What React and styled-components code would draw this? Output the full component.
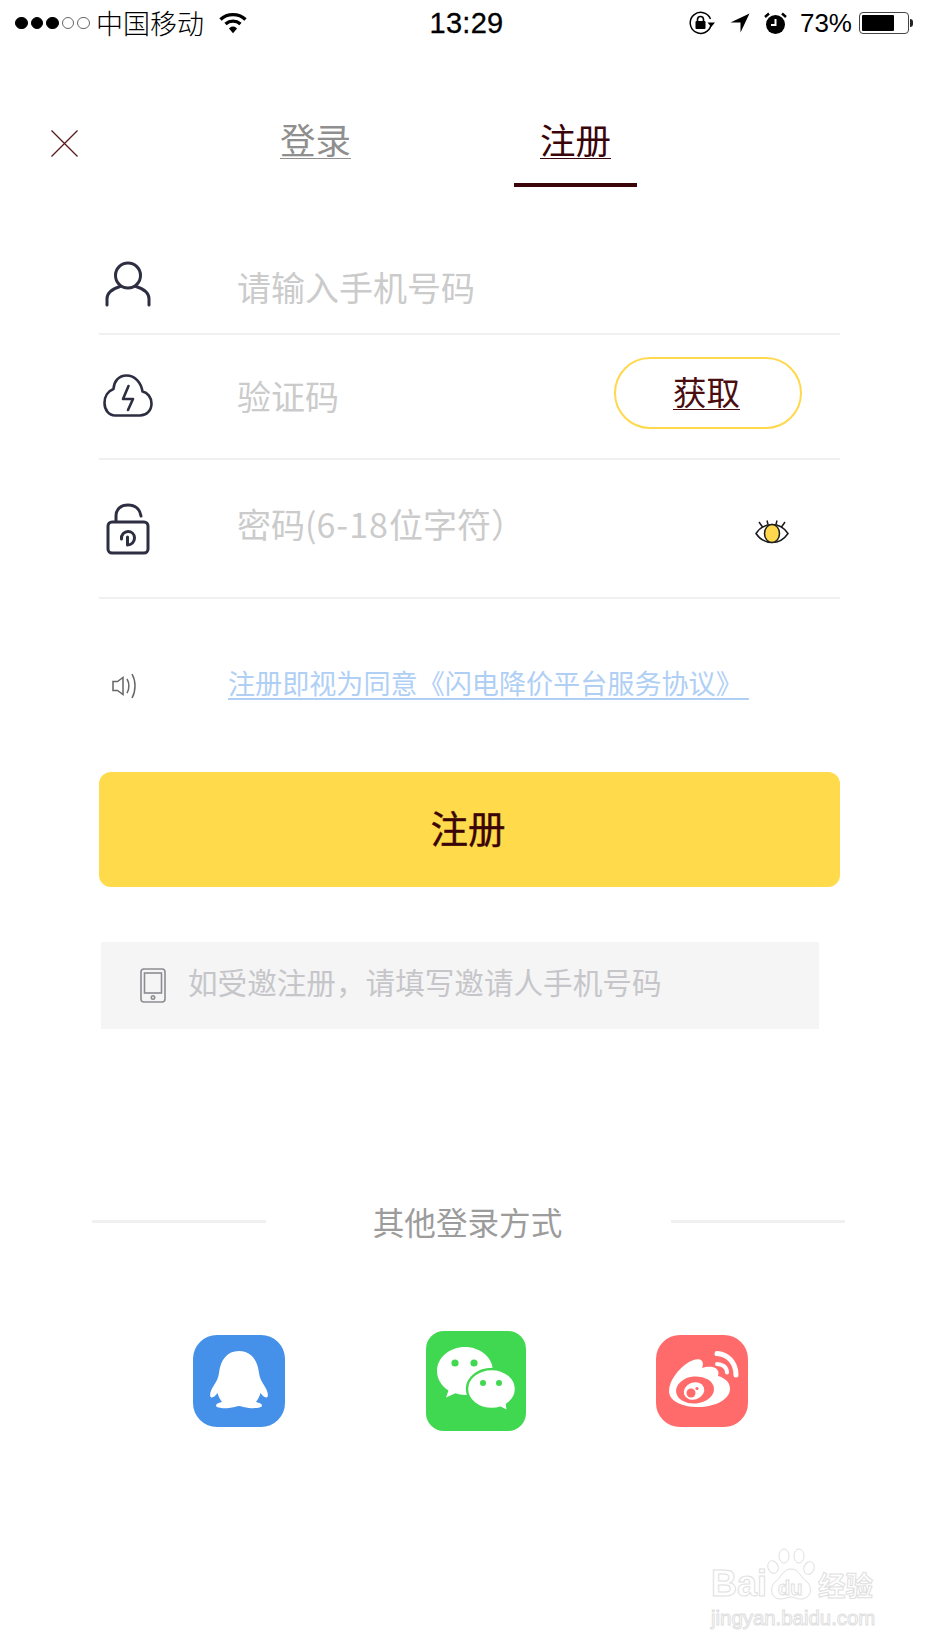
import React from "react"
import styled, { createGlobalStyle } from "styled-components"

const cjk = `"Noto Sans CJK SC", "Liberation Sans", sans-serif`
const latin = `"Liberation Sans", "Noto Sans CJK SC", sans-serif`
const ink = "#3a0508"
const iconInk = "#2e2e42"

const GlobalStyle = createGlobalStyle`
  html, body {
    margin: 0;
    padding: 0;
    background: #fff;
  }
`

const Page = styled.div`
  position: relative;
  width: 926px;
  height: 1647px;
  overflow: hidden;
  background: #fff;
  font-family: ${cjk};
`

const StatusBar = styled.div`
  display: grid;
  grid-template-columns: 1fr auto 1fr;
  align-items: center;
  height: 46px;
  padding: 0 12px 0 15px;
  color: #000;
`

const StatusLeft = styled.div`
  display: flex;
  align-items: center;
`

const Signal = styled.div`
  display: flex;
  gap: 3px;
  margin-right: 6px;
`

const Dot = styled.span`
  width: 12.6px;
  height: 12.6px;
  border-radius: 50%;
  box-sizing: border-box;
  border: 1px solid ${({ $on }) => ($on ? "#000" : "#666")};
  background: ${({ $on }) => ($on ? "#000" : "#fff")};
`

const Carrier = styled.span`
  font-size: 27px;
  font-weight: 300;
  line-height: 46px;
  margin-right: 15px;
`

const Clock = styled.div`
  font-family: ${latin};
  font-size: 29px;
  line-height: 46px;
  letter-spacing: 0.3px;
  margin-left: 4px;
  -webkit-text-stroke: 0.3px #000;
`

const StatusRight = styled.div`
  display: flex;
  align-items: center;
  justify-content: flex-end;
`

const StatusGap = styled.span`
  width: 14px;
`

const Percent = styled.span`
  font-family: ${latin};
  font-size: 26px;
  line-height: 46px;
  margin: 0 7px 0 13px;
`

const Battery = styled.div`
  position: relative;
  box-sizing: border-box;
  width: 50px;
  height: 22px;
  padding: 2px;
  margin-right: 5px;
  border: 1px solid #444;
  border-radius: 4px;
  &::after {
    content: "";
    position: absolute;
    right: -5px;
    top: 6px;
    width: 3px;
    height: 8px;
    border-radius: 0 3px 3px 0;
    background: #222;
  }
`

const BatteryFill = styled.div`
  height: 100%;
  background: #000;
  border-radius: 1px;
`

const TopNav = styled.div`
  display: flex;
  align-items: flex-start;
  padding: 70px 0 0 51px;
  height: 71px;
`

const CloseButton = styled.div`
  display: flex;
  margin: 14px 176px 0 0;
`

const Tabs = styled.div`
  display: flex;
  gap: 137px;
`

const Tab = styled.div`
  box-sizing: border-box;
  width: 123px;
  height: 71px;
  padding-top: 2px;
  text-align: center;
  font-size: 35.5px;
  font-weight: 400;
  line-height: 42px;
  color: ${({ $active }) => ($active ? ink : "#8f8f8f")};
  text-decoration: underline;
  text-decoration-thickness: 1px;
  text-decoration-skip-ink: none;
  text-underline-offset: 4px;
  border-bottom: 4px solid ${({ $active }) => ($active ? ink : "transparent")};
`

const Form = styled.div`
  margin: 56px 86px 0 99px;
`

const Field = styled.div`
  display: flex;
  align-items: center;
  height: ${({ $height }) => $height}px;
  box-sizing: border-box;
  border-bottom: 2px solid #f0f0f0;
`

const FieldIcon = styled.div`
  display: flex;
  width: 138px;
  flex: none;
  padding-left: ${({ $left }) => $left}px;
  margin-bottom: ${({ $lift }) => $lift || 0}px;
  box-sizing: border-box;
`

const Placeholder = styled.div`
  flex: 1;
  font-size: 34px;
  font-weight: 400;
  line-height: 46px;
  color: #cbcbcb;
  transform: translateY(${({ $shift }) => $shift || 0}px);
`

const Digits = styled.span`
  letter-spacing: 1px;
`

const CodeButton = styled.div`
  box-sizing: border-box;
  width: 188px;
  height: 72px;
  margin: 0 38px 8px 0;
  border: 2px solid #ffd84d;
  border-radius: 36px;
  padding-right: 3px;
  text-align: center;
  font-size: 33.5px;
  font-weight: 400;
  line-height: 64px;
  color: #4a0d10;
  text-decoration: underline;
  text-decoration-thickness: 1px;
  text-decoration-skip-ink: none;
  text-underline-offset: 4px;
`

const EyeToggle = styled.div`
  display: flex;
  margin: 6px 51px 0 0;
`

const Notice = styled.div`
  display: flex;
  align-items: center;
  height: 173px;
`

const NoticeIcon = styled.div`
  display: flex;
  width: 129px;
  flex: none;
  padding-left: 13px;
  box-sizing: border-box;
`

const AgreementLink = styled.span`
  margin-bottom: 6px;
  font-size: 27.1px;
  font-weight: 400;
  line-height: 36px;
  white-space: pre;
  color: #b0cff5;
  text-decoration: underline;
  text-decoration-thickness: 2px;
  text-decoration-skip-ink: none;
  text-underline-offset: 4px;
`

const SubmitButton = styled.div`
  height: 115px;
  padding-right: 3px;
  border-radius: 12px;
  background: #ffda4a;
  text-align: center;
  font-size: 37.5px;
  font-weight: 400;
  line-height: 110px;
  color: ${ink};
  -webkit-text-stroke: 0.4px ${ink};
`

const InviteBar = styled.div`
  display: flex;
  align-items: center;
  gap: 22px;
  width: 718px;
  height: 87px;
  margin: 55px 0 0 2px;
  padding-left: 39px;
  box-sizing: border-box;
  background: #f5f5f5;
`

const InviteText = styled.span`
  margin-bottom: 9px;
  font-size: 29.6px;
  font-weight: 400;
  color: #c6c6ca;
`

const OtherHeading = styled.div`
  display: grid;
  grid-template-columns: 174px 1fr 174px;
  align-items: center;
  margin: 167px 81px 0 92px;
  line-height: 50px;
  text-align: center;
`

const OtherLabel = styled.span`
  font-size: 31.6px;
  font-weight: 400;
  color: #9c9c9c;
  margin-right: 2px;
`

const HeadingRule = styled.div`
  height: 3px;
  background: #f0f0f0;
`

const SocialRow = styled.div`
  display: flex;
  align-items: center;
  margin: 85px 0 0 193px;
`

const SocialTile = styled.div`
  display: flex;
  width: ${({ $size }) => $size}px;
  height: ${({ $size }) => $size}px;
  margin-right: ${({ $gap }) => $gap || 0}px;
  border-radius: ${({ $radius }) => $radius}px;
  background: ${({ $color }) => $color};
`

const Watermark = styled.div`
  position: absolute;
  left: 711px;
  top: 1546px;
  width: 170px;
  color: #fff;
  font-family: ${latin};
  -webkit-text-stroke: 1px #e0e0e0;
`

const WatermarkTop = styled.div`
  display: flex;
  align-items: flex-end;
  height: 56px;
`

const WatermarkBai = styled.span`
  font-size: 36px;
  font-weight: 700;
  line-height: 36px;
`

const WatermarkPaw = styled.div`
  position: relative;
  display: flex;
  width: 48px;
  margin: 0 3px 0 0;
`

const WatermarkDu = styled.span`
  position: absolute;
  left: 11px;
  bottom: 4px;
  font-size: 20px;
  font-weight: 700;
  line-height: 20px;
`

const WatermarkJy = styled.span`
  font-family: ${cjk};
  font-size: 27.5px;
  font-weight: 700;
  line-height: 36px;
`

const WatermarkUrl = styled.div`
  margin-top: 4px;
  font-size: 20.4px;
  line-height: 24px;
  white-space: nowrap;
`

const WifiIcon = () => (
  <svg width="28" height="22" viewBox="0 0 28 22" fill="none" stroke="#000" strokeWidth="3.4">
    <path d="M1.5 7.5C8.5 1 19.5 1 26.5 7.5" />
    <path d="M6.5 12C11 8.2 17 8.2 21.5 12" />
    <path d="M11 16.5L14 20L17 16.5C15.2 15 12.8 15 11 16.5Z" fill="#000" strokeWidth="1.5" />
  </svg>
)

const RotationLockIcon = () => (
  <svg width="27" height="24" viewBox="0 0 27 24" fill="none">
    <path d="M22 14A10.5 10.5 0 1 1 21.5 8" stroke="#000" strokeWidth="1.5" />
    <path d="M18.5 11.5H26L22.2 16Z" fill="#000" />
    <rect x="6.5" y="10" width="10" height="8" rx="1" fill="#000" />
    <path d="M8.5 10.5V8.5a3 3 0 0 1 6 0v2" stroke="#000" strokeWidth="1.6" />
  </svg>
)

const LocationIcon = () => (
  <svg width="20" height="20" viewBox="0 0 20 20">
    <path d="M19.5 0.5L0.5 9.5H10.5V19.5Z" fill="#000" />
  </svg>
)

const AlarmIcon = () => (
  <svg width="23" height="23" viewBox="0 0 23 23">
    <circle cx="11.5" cy="12.5" r="9.5" fill="#000" />
    <path d="M1 5L5 1.5M22 5L18 1.5" stroke="#000" strokeWidth="2.4" />
    <path d="M11.5 7V13H7" stroke="#fff" strokeWidth="2" fill="none" />
  </svg>
)

const CloseIcon = () => (
  <svg width="27" height="27" viewBox="0 0 27 27" stroke="#5a1a1c" strokeWidth="1.3">
    <path d="M0.5 0.5L26.5 26.5M26.5 0.5L0.5 26.5" />
  </svg>
)

const UserIcon = () => (
  <svg width="46" height="46" viewBox="0 0 46 46" fill="none" stroke={iconInk} strokeWidth="3" strokeLinecap="round">
    <circle cx="23" cy="14.5" r="12.5" />
    <path d="M2 44V38C2 32 7 28 15 25.5M44 44V38C44 32 39 28 31 25.5" />
  </svg>
)

const CloudIcon = () => (
  <svg width="50" height="43" viewBox="0 0 50 43" fill="none" stroke={iconInk} strokeWidth="2.6" strokeLinecap="round" strokeLinejoin="round">
    <path d="M12 41.5H37C43.5 41.5 48.5 36.5 48.5 29.5C48.5 23.5 44.5 18.5 39.5 17.5C38 8.5 32 1.5 23.5 1.5C15.5 1.5 11 7.5 10.5 15C5 17 1.5 22.5 1.5 29C1.5 36 6 41.5 12 41.5Z" />
    <path d="M25.5 12L20 25H30L25 36" />
  </svg>
)

const LockIcon = () => (
  <svg width="44" height="52" viewBox="0 0 44 52" fill="none" stroke={iconInk} strokeWidth="3" strokeLinecap="round" strokeLinejoin="round">
    <rect x="2" y="19" width="40" height="31" rx="4" />
    <path d="M10 18V13C10 6 15 2 22 2C29 2 34 6 35 13" />
    <path d="M15.5 36C15 31.5 18.5 28.5 22 28.5C25.5 28.5 28.5 31 28.5 35C28.5 39 25.5 42 21.5 42V34" />
  </svg>
)

const EyeIcon = () => (
  <svg width="34" height="24" viewBox="0 0 34 24" fill="none" stroke="#1c1c1c" strokeWidth="1.5">
    <path d="M1 13.5C5 7.5 11 4.5 17 4.5C23 4.5 29 7.5 33 13.5C29 19.5 23 22.5 17 22.5C11 22.5 5 19.5 1 13.5Z" />
    <ellipse cx="17" cy="13.5" rx="7.5" ry="9" fill="#ffd84d" />
    <path d="M4 2L7.5 7M12 0.5L13 4.5M22 0.5L21 4.5M30 2L26.5 7" />
  </svg>
)

const SpeakerIcon = () => (
  <svg width="26" height="28" viewBox="0 0 26 28" fill="none" stroke="#666" strokeWidth="1.5">
    <path d="M1 9.5H5.5L11 5.5V22.5L5.5 18.5H1Z" />
    <path d="M15 7C17.5 11 17.5 17 15 21" />
    <path d="M20 2C24 9 24 19 20 26" />
  </svg>
)

const TabletIcon = () => (
  <svg width="26" height="35" viewBox="0 0 26 35" fill="none" stroke="#8c8c92" strokeWidth="1.6">
    <rect x="1" y="1" width="24" height="33" rx="3" />
    <rect x="4.5" y="5" width="17" height="20" />
    <circle cx="13" cy="29.5" r="1.7" />
  </svg>
)

const QQGlyph = () => (
  <svg width="92" height="92" viewBox="0 0 92 92">
    <path
      fill="#fff"
      d="M46 16C34 16 27.5 25 26 38C25.5 43 23 47 20.5 51C17 56 16 62 18.5 62.5C20.5 63 23 60 24.5 58C25.5 62 27.5 65 29 67C25 68 23 69 23 70.5C23 73 30 73.5 36 73C40 72.8 44 71 46 71C48 71 52 72.8 56 73C62 73.5 69 73 69 70.5C69 69 67 68 63 67C64.5 65 66.5 62 67.5 58C69 60 71.5 63 73.5 62.5C76 62 75 56 71.5 51C69 47 66.5 43 66 38C64.5 25 58 16 46 16Z"
    />
  </svg>
)

const WeChatGlyph = () => (
  <svg width="100" height="100" viewBox="0 0 100 100">
    <path fill="#fff" d="M39 16C23.5 16 11 26.7 11 40C11 48 15.5 55 22.5 59.5L20 66.5L29.5 62.3C32.5 63.4 35.7 64 39 64C54.5 64 67 53.3 67 40C67 26.7 54.5 16 39 16Z" />
    <circle cx="29" cy="32" r="3.6" fill="#40d851" />
    <circle cx="48" cy="32" r="3.6" fill="#40d851" />
    <path fill="#fff" stroke="#40d851" strokeWidth="2.4" d="M66 38C52 38 41 47 41 58C41 69 52 78 66 78C69 78 72 77.5 74.5 76.7L82 80.5L81 73.5C86.5 69.7 90 64.2 90 58C90 47 79 38 66 38Z" />
    <circle cx="57" cy="52" r="3" fill="#40d851" />
    <circle cx="73" cy="52" r="3" fill="#40d851" />
  </svg>
)

const WeiboGlyph = () => (
  <svg width="92" height="92" viewBox="0 0 92 92">
    <path fill="#fff" d="M13 56C13 46 22 34 33 27C38 24 44 23 46 26C48 29 46 33 46 33C52 31 60 31 62 36C63 38 62 41 62 41C69 43 74 47 74 54C74 64 60 72 42 72C26 72 13 66 13 56Z" />
    <ellipse cx="39" cy="55" rx="19" ry="13.5" fill="#ff6b6b" transform="rotate(-5 39 55)" />
    <ellipse cx="38" cy="56" rx="10.5" ry="8.5" fill="#fff" transform="rotate(-20 38 56)" />
    <circle cx="35" cy="58" r="4.5" fill="#ff6b6b" />
    <circle cx="41" cy="53.5" r="1.6" fill="#ff6b6b" />
    <path d="M61 18.5C71 19 80 27 80 40" fill="none" stroke="#fff" strokeWidth="5" strokeLinecap="round" />
    <path d="M61 29C66 29 71 32 71 37.5" fill="none" stroke="#fff" strokeWidth="4" strokeLinecap="round" />
  </svg>
)

const PawMark = () => (
  <svg width="48" height="54" viewBox="0 0 48 54" fill="#fff" stroke="#e0e0e0" strokeWidth="1">
    <ellipse cx="6" cy="19" rx="5" ry="6.5" transform="rotate(-20 6 19)" />
    <ellipse cx="17" cy="8" rx="5" ry="7" />
    <ellipse cx="32" cy="8" rx="5" ry="7" />
    <ellipse cx="42" cy="20" rx="5" ry="6.5" transform="rotate(20 42 20)" />
    <path d="M24 21C32 21 34 30 40 34C46 39 44 51 34 51C29 51 27 49 24 49C21 49 18 51 13 51C4 51 2 39 8 34C14 30 16 21 24 21Z" />
  </svg>
)

const signal = [true, true, true, false, false]

const App = () => {
  return (
    <Page>
      <GlobalStyle />
      <StatusBar>
        <StatusLeft>
          <Signal>
            {signal.map((on, i) => (
              <Dot key={i} $on={on} />
            ))}
          </Signal>
          <Carrier>中国移动</Carrier>
          <WifiIcon />
        </StatusLeft>
        <Clock>13:29</Clock>
        <StatusRight>
          <RotationLockIcon />
          <StatusGap />
          <LocationIcon />
          <StatusGap />
          <AlarmIcon />
          <Percent>73%</Percent>
          <Battery>
            <BatteryFill style={{ width: "73%" }} />
          </Battery>
        </StatusRight>
      </StatusBar>

      <TopNav>
        <CloseButton>
          <CloseIcon />
        </CloseButton>
        <Tabs>
          <Tab>登录</Tab>
          <Tab $active>注册</Tab>
        </Tabs>
      </TopNav>

      <Form>
        <Field $height={92}>
          <FieldIcon $left={6} $lift={8}>
            <UserIcon />
          </FieldIcon>
          <Placeholder $shift={-1}>请输入手机号码</Placeholder>
        </Field>
        <Field $height={125}>
          <FieldIcon $left={4} $lift={2}>
            <CloudIcon />
          </FieldIcon>
          <Placeholder $shift={-1}>验证码</Placeholder>
          <CodeButton>获取</CodeButton>
        </Field>
        <Field $height={139}>
          <FieldIcon $left={7}>
            <LockIcon />
          </FieldIcon>
          <Placeholder $shift={-5}>
            密码(<Digits>6-18</Digits>位字符）
          </Placeholder>
          <EyeToggle>
            <EyeIcon />
          </EyeToggle>
        </Field>

        <Notice>
          <NoticeIcon>
            <SpeakerIcon />
          </NoticeIcon>
          <AgreementLink>注册即视为同意《闪电降价平台服务协议》 </AgreementLink>
        </Notice>

        <SubmitButton>注册</SubmitButton>

        <InviteBar>
          <TabletIcon />
          <InviteText>如受邀注册，请填写邀请人手机号码</InviteText>
        </InviteBar>
      </Form>

      <OtherHeading>
        <HeadingRule />
        <OtherLabel>其他登录方式</OtherLabel>
        <HeadingRule />
      </OtherHeading>

      <SocialRow>
        <SocialTile $size={92} $radius={24} $color="#4590e8" $gap={141}>
          <QQGlyph />
        </SocialTile>
        <SocialTile $size={100} $radius={18} $color="#40d851" $gap={130}>
          <WeChatGlyph />
        </SocialTile>
        <SocialTile $size={92} $radius={24} $color="#ff6b6b">
          <WeiboGlyph />
        </SocialTile>
      </SocialRow>

      <Watermark>
        <WatermarkTop>
          <WatermarkBai>Bai</WatermarkBai>
          <WatermarkPaw>
            <PawMark />
            <WatermarkDu>du</WatermarkDu>
          </WatermarkPaw>
          <WatermarkJy>经验</WatermarkJy>
        </WatermarkTop>
        <WatermarkUrl>jingyan.baidu.com</WatermarkUrl>
      </Watermark>
    </Page>
  )
}

export default App
